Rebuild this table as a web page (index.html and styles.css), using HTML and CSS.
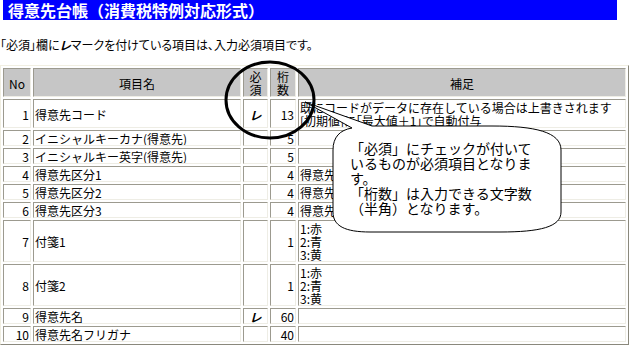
FILE: index.html
```html
<!DOCTYPE html>
<html lang="ja">
<head>
<meta charset="utf-8">
<title>得意先台帳</title>
<link rel="stylesheet" href="styles.css">
</head>
<body>
<div class="page">
  <h1 class="title">得意先台帳（消費税特例対応形式）</h1>
  <p class="note">「必須」欄に<b class="chk">レ</b>マークを付けている項目は、入力必須項目です。</p>
  <table class="grid">
    <colgroup>
      <col class="w-no"><col class="w-name"><col class="w-req"><col class="w-len"><col class="w-memo">
    </colgroup>
    <thead>
      <tr><th>No</th><th>項目名</th><th>必<br>須</th><th>桁<br>数</th><th>補足</th></tr>
    </thead>
    <tbody>
      <tr><td class="num">1</td><td>得意先コード</td><td class="req"><b class="chk">レ</b></td><td class="num">13</td><td>既にコードがデータに存在している場合は上書きされます<br><span class="p">[初期値]に「最大値＋1」で自動付与</span></td></tr>
      <tr><td class="num">2</td><td>イニシャルキーカナ(得意先)</td><td class="req"></td><td class="num">5</td><td></td></tr>
      <tr><td class="num">3</td><td>イニシャルキー英字(得意先)</td><td class="req"></td><td class="num">5</td><td></td></tr>
      <tr><td class="num">4</td><td>得意先区分1</td><td class="req"></td><td class="num">4</td><td>得意先区分1</td></tr>
      <tr><td class="num">5</td><td>得意先区分2</td><td class="req"></td><td class="num">4</td><td>得意先区分2</td></tr>
      <tr><td class="num">6</td><td>得意先区分3</td><td class="req"></td><td class="num">4</td><td>得意先区分3</td></tr>
      <tr><td class="num">7</td><td>付箋1</td><td class="req"></td><td class="num">1</td><td>1:赤<br>2:青<br>3:黄</td></tr>
      <tr><td class="num">8</td><td>付箋2</td><td class="req"></td><td class="num">1</td><td>1:赤<br>2:青<br>3:黄</td></tr>
      <tr><td class="num">9</td><td>得意先名</td><td class="req"><b class="chk">レ</b></td><td class="num">60</td><td></td></tr>
      <tr><td class="num">10</td><td>得意先名フリガナ</td><td class="req"></td><td class="num">40</td><td></td></tr>
    </tbody>
  </table>

  <svg class="overlay" width="629" height="346" viewBox="0 0 629 346" aria-hidden="true">
    <path d="M305 102 L372 126 L492 126 C535 126 561 132 561 150 L561 212 C561 227 540 232 500 232 L370 232 C345 232 333 226 333 212 L333 150 C333 137 340 130 352 128 Z" fill="#fff" stroke="#000" stroke-width="1"/>
    <ellipse cx="270" cy="100" rx="44" ry="38" fill="none" stroke="#000" stroke-width="3"/>
  </svg>
  <div class="bubble-text">「必須」にチェックが付いて<br>いるものが必須項目となりま<br>す。<br>「桁数」は入力できる文字数<br>（半角）となります。</div>
</div>
</body>
</html>
```
FILE: styles.css
```css
html, body {
  margin: 0;
  padding: 0;
  background: #fff;
}
body {
  font-family: "Noto Sans CJK JP", "Noto Sans", sans-serif;
  font-size: 12px;
  color: #000;
}
.page {
  position: relative;
  width: 629px;
  height: 346px;
  overflow: hidden;
}
.title {
  box-sizing: border-box;
  margin: 0 0 0 3px;
  width: 614px;
  height: 20px;
  padding-left: 5px;
  background: #0000ff;
  color: #fff;
  font-size: 16px;
  font-weight: bold;
  line-height: 20px;
  white-space: nowrap;
}
.note {
  margin: 18px 0 13px 0;
  line-height: 14px;
  font-size: 12px;
  white-space: nowrap;
  font-feature-settings: "palt";
}
.chk {
  font-weight: bold;
  font-style: italic;
}
.grid {
  width: 629px;
  table-layout: fixed;
  border-collapse: separate;
  border-spacing: 2px;
  border: 1px solid;
  border-color: #f1efe2 #8a887c #8a887c #f1efe2;
  background: #fff;
}
.w-no { width: 28px; }
.w-name { width: 208px; }
.w-req { width: 25px; }
.w-len { width: 26px; }
.w-memo { width: 328px; }
.grid th,
.grid td {
  border: 1px solid;
  border-color: #9c9a8f #eeede5 #eeede5 #9c9a8f;
  padding: 1px 1px 0;
  line-height: 13px;
  font-size: 12px;
  white-space: nowrap;
  overflow: hidden;
  vertical-align: middle;
}
.grid th {
  background: #c6c6c6;
  font-weight: normal;
  text-align: center;
}
.grid td {
  text-align: left;
}
.grid td.num {
  text-align: right;
}
.grid td.req {
  text-align: center;
}
.p {
  font-feature-settings: "palt";
}
.overlay {
  position: absolute;
  left: 0;
  top: 0;
  pointer-events: none;
}
.bubble-text {
  position: absolute;
  left: 350px;
  top: 141px;
  font-size: 14px;
  line-height: 15px;
  white-space: nowrap;
}
```
